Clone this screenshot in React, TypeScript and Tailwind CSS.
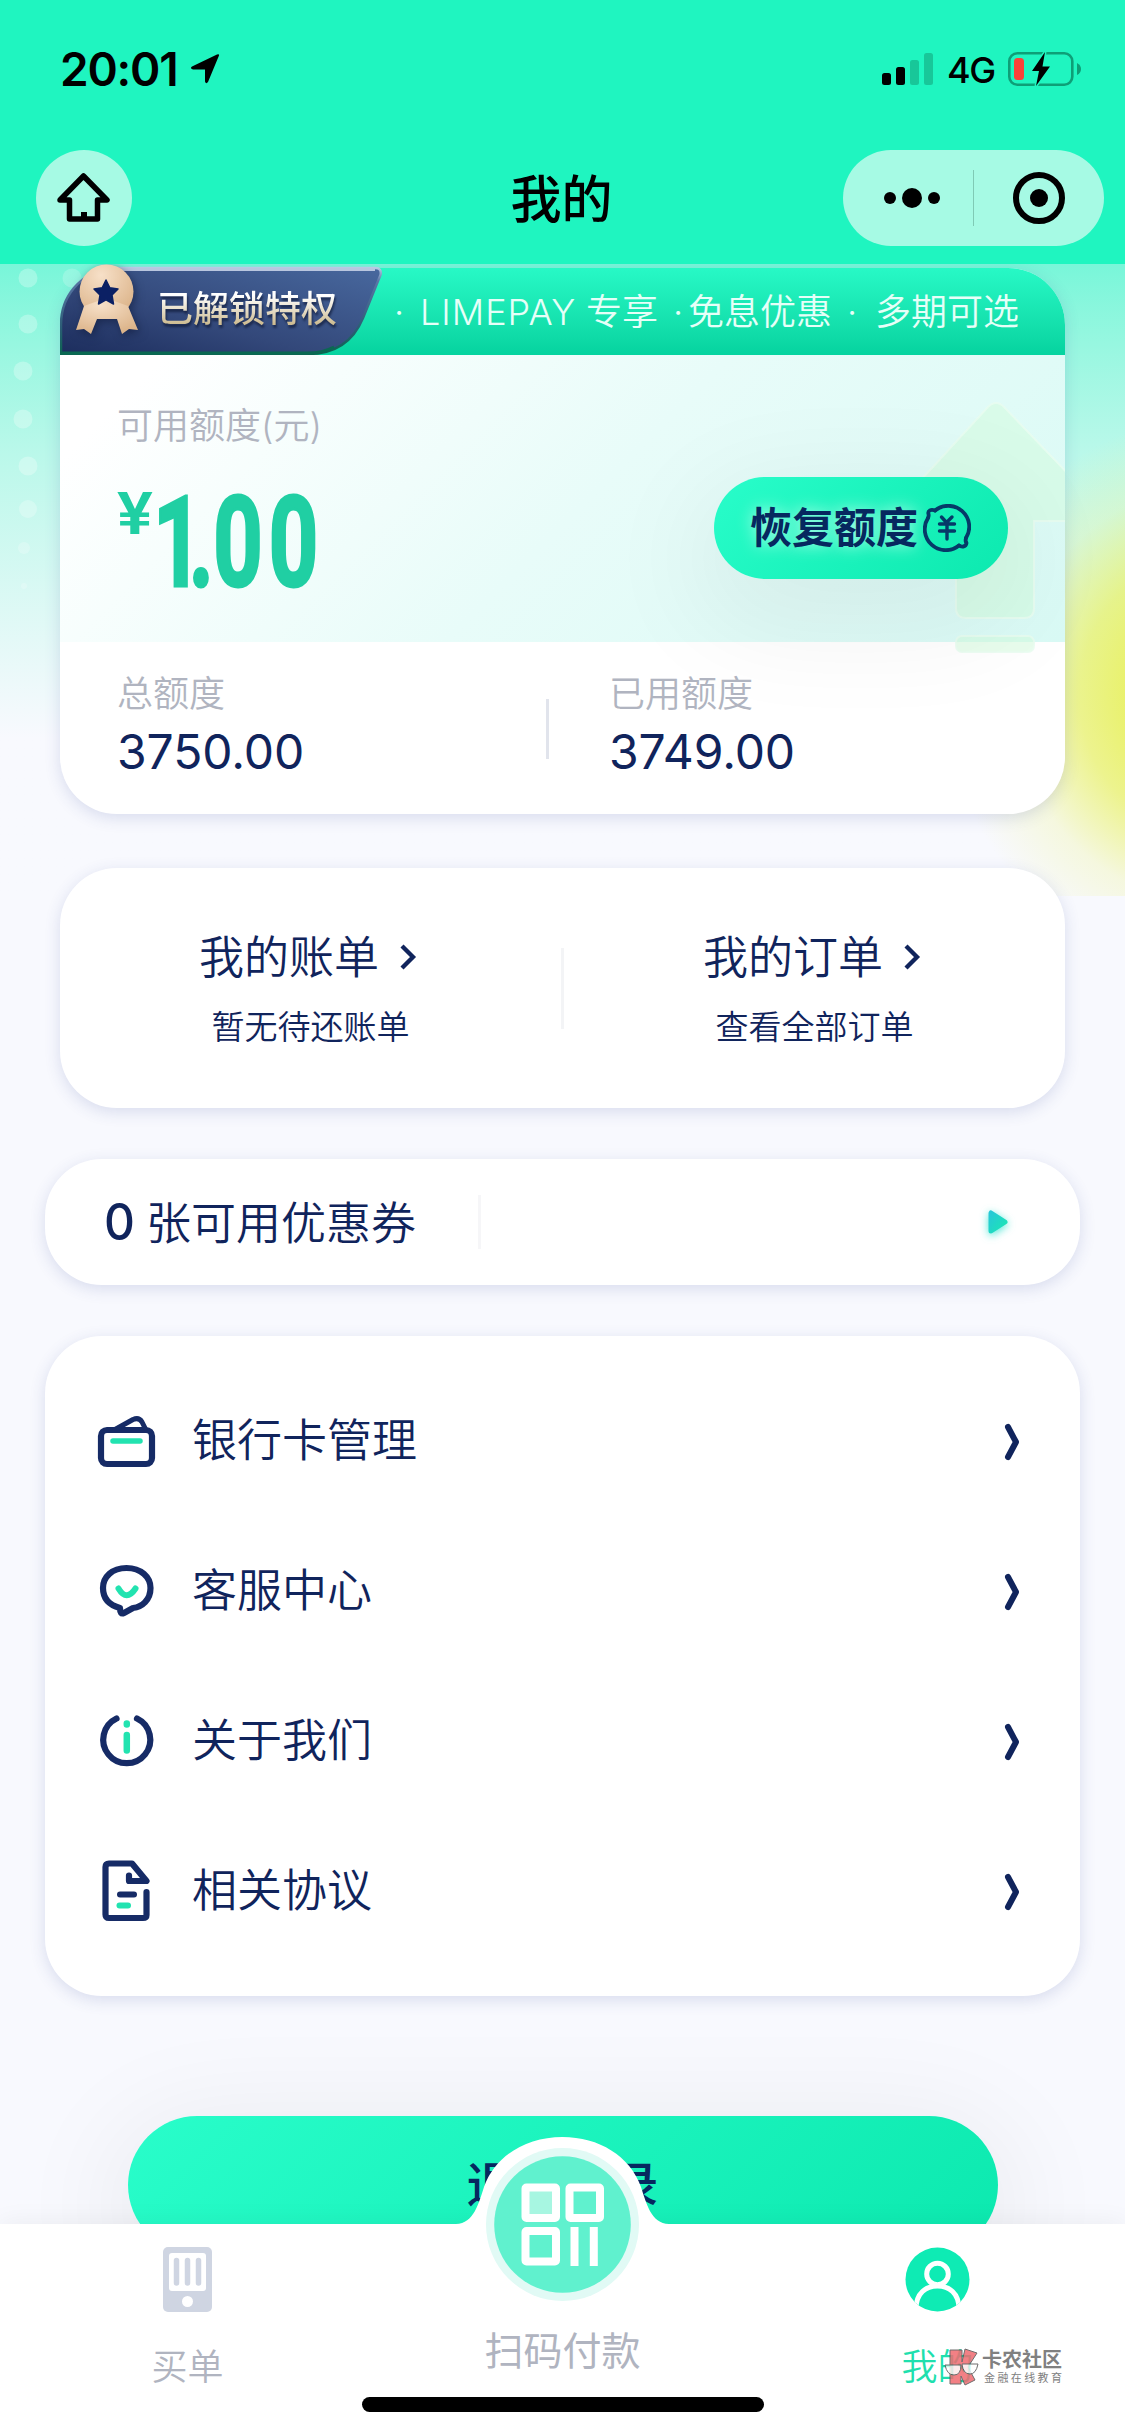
import React from "react";

const CARD_SHADOW = "shadow-[0_4px_16px_rgba(50,70,150,0.16)]";

function StatusBar() {
  return (
    <div className="flex h-[138px] items-center justify-between pl-[60px] pr-[43px]">
      <div className="flex items-center gap-[13px]">
        <span className="w-[117px] text-[46px] leading-[46px] font-semibold tracking-[-1.2px] text-black">20:01</span>
        <svg width="30" height="30" viewBox="0 0 30 30">
          <path d="M29 1.5 L18 28 Q16 30.500 15 27.500 V15.500 H3 Q-0.500 14.500 2 12.500 L27 0.500 Q29.500 -0.300 29 1.500Z" fill="#000" />
        </svg>
      </div>
      <div className="flex items-center">
        <svg width="52" height="34" viewBox="0 0 52 34">
          <rect x="0" y="21" width="9" height="12" rx="2.500" fill="#000" />
          <rect x="14" y="15" width="9" height="18" rx="2.500" fill="#000" />
          <rect x="28" y="8" width="9" height="25" rx="2.500" fill="#18c799" />
          <rect x="42" y="1" width="9" height="32" rx="2.500" fill="#18c799" />
        </svg>
        <span className="mt-[2px] ml-[13px] w-[61px] text-[36px] leading-[36px] font-[450] tracking-[-1.5px] text-black">4G</span>
        <svg width="74" height="34" viewBox="0 0 74 34">
          <rect x="1.300" y="1.300" width="63" height="31.400" rx="8" fill="none" stroke="#0e9f77" strokeWidth="2.600" />
          <path d="M69 11 Q73 13 73 17 Q73 21 69 23Z" fill="#0e9f77" />
          <rect x="6" y="6" width="10" height="22" rx="3.500" fill="#fb4238" />
          <path d="M37 0 L24 19 H31 L28 34 L42 14.500 H34.500 L37 0Z" fill="#000" stroke="#1ff5c0" strokeWidth="3" paintOrder="stroke" />
        </svg>
      </div>
    </div>
  );
}

function NavBar() {
  return (
    <div className="grid grid-cols-[1fr_auto_1fr] items-center pt-[12px] pl-[36px] pr-[21px]">
      <div className="flex size-[96px] items-center justify-center rounded-full bg-[#a6fae4]">
        <svg width="54" height="50" viewBox="0 0 54 50" fill="none" stroke="#000" strokeWidth="5.500" strokeLinejoin="round">
          <path d="M26.500 3 L50 27 H40.500 V46 H12.500 V27 H3 Z" />
          <path d="M27 39 V46" strokeWidth="6" />
        </svg>
      </div>
      <h1 className="pt-[3px] pr-[17px] text-[51px] leading-[93px] font-medium text-black">我的</h1>
      <div className="flex h-[96px] w-[261px] items-center justify-self-end rounded-full bg-[#a6fae4]">
        <div className="flex flex-1 items-center justify-center gap-[6px] pl-[8px]">
          <i className="size-[12px] rounded-full bg-black" />
          <i className="size-[20px] rounded-full bg-black" />
          <i className="size-[12px] rounded-full bg-black" />
        </div>
        <i className="h-[56px] w-px bg-[#7fcab5]" />
        <div className="flex w-[130px] items-center justify-center">
          <div className="flex size-[52px] items-center justify-center rounded-full border-[6px] border-black">
            <i className="size-[18px] rounded-full bg-black" />
          </div>
        </div>
      </div>
    </div>
  );
}

const DOTS: [number, number, number, number][] = [
  [28, 14, 9.5, 0.28], [72, 14, 9.5, 0.2], [28, 60, 9.5, 0.28], [23, 107, 9.5, 0.28], [23, 155, 9.5, 0.28],
  [28, 202, 9.5, 0.28], [28, 245, 9, 0.25], [24, 284, 6, 0.22], [24, 322, 3, 0.2],
];

function Backdrop() {
  return (
    <div className="absolute inset-x-0 top-0 h-[632px] overflow-hidden bg-linear-to-b from-[#78f6d9] from-0% via-[#baf8ea] via-30% to-[#f8f9fe] to-75%">
      <div className="absolute top-[150px] left-[945px] size-[560px] bg-[radial-gradient(closest-side,#e9f168_0%,#e9f168_32%,rgba(233,241,104,0.75)_52%,rgba(238,244,150,0.3)_76%,rgba(248,249,254,0)_100%)]" />
      <svg className="absolute top-0 left-0" width="90" height="340" viewBox="0 0 90 340">
        {DOTS.map(([cx, cy, r, o], i) => (
          <circle key={i} cx={cx} cy={cy} r={r} fill="#fff" opacity={o} />
        ))}
      </svg>
    </div>
  );
}

function PrivilegeBanner() {
  return (
    <div className="relative flex h-[87px] items-center rounded-t-[57px] bg-linear-to-b from-[#27f9c6] to-[#05d39f] text-[36px] leading-[44px] font-[350] text-[#e6fff8]">
      <svg className="absolute -top-[4px] left-0" width="324" height="92" viewBox="0 0 324 92">
        <defs>
          <linearGradient id="navy" x1="0" y1="1" x2="1" y2="0">
            <stop offset="0" stopColor="#1c2d5d" />
            <stop offset="0.400" stopColor="#33487a" />
            <stop offset="1" stopColor="#48689e" />
          </linearGradient>
          <linearGradient id="edge" x1="0" y1="0" x2="0" y2="1">
            <stop offset="0" stopColor="#b9c9e4" />
            <stop offset="0.150" stopColor="#5a76a6" />
            <stop offset="0.700" stopColor="#2b5d75" />
            <stop offset="1" stopColor="#0b6650" />
          </linearGradient>
          <radialGradient id="gold" cx="0.400" cy="0.200" r="0.800">
            <stop offset="0" stopColor="#f7e0c8" />
            <stop offset="1" stopColor="#dcb48a" />
          </radialGradient>
        </defs>
        <path d="M1 90 V61 C1 28 26 4 58 4 H315 Q322 4 320.500 11 L303 54 Q288 90 248 90Z" fill="url(#navy)" stroke="url(#edge)" strokeWidth="2.500" />
        <path d="M58 5.500 H315" stroke="#b9c6df" strokeWidth="3" />
        <path d="M2 89 H248 Q262 89 274 83" fill="none" stroke="#0a6852" strokeWidth="3" />
        <g className="drop-shadow-[2px_3px_4px_rgba(10,20,50,0.5)]">
          <circle cx="46.500" cy="27.500" r="27" fill="url(#gold)" />
          <path d="M24 42 L16 66 L24 65 L31 70 L37 55 H57 L62 70 L69 65 L78 66 L68 42 L46 34Z" fill="url(#gold)" />
        </g>
        <path d="M46 16 L49.800 23.800 L58 25 L52 31 L53.500 40 L46 35.800 L38.500 40 L40 31 L34 25 L42.200 23.800Z" fill="#0b2064" stroke="#0b2064" strokeWidth="1.500" strokeLinejoin="round" />
      </svg>
      <span className="relative mb-[5px] ml-[97px] w-[181px] bg-linear-to-b from-[#ffffff] from-20% to-[#cdbb90] to-85% bg-clip-text text-[36px] font-medium whitespace-nowrap text-transparent drop-shadow-[1px_3px_1px_rgba(15,25,55,0.7)]">已解锁特权</span>
      <div className="flex pl-[56px] whitespace-nowrap">
        <span className="w-[26px]">·</span>
        <span className="w-[166px] tracking-[1px]">LIMEPAY</span>
        <span className="w-[87px]">专享</span>
        <span className="w-[15px]">·</span>
        <span className="w-[159px]">免息优惠</span>
        <span className="w-[28px]">·</span>
        <span>多期可选</span>
      </div>
    </div>
  );
}

function CoinIcon() {
  return (
    <svg width="48" height="48" viewBox="0 0 48 48" fill="none" stroke="#063a68" strokeWidth="3.800" strokeLinecap="round" strokeLinejoin="round">
      <path d="M12 6.500 A21 21 0 0 1 43 34 M36 41.500 A21 21 0 0 1 5 14" />
      <path d="M12 6.500 C8 5 4.500 6.500 5.500 10 Q6 12 5 14" />
      <path d="M43 34 Q42 37 43.500 39 C43 43.500 38 43 36 41.500" />
      <path d="M18.500 13 L23.500 18.500 L29 13 M16.500 20 H31.500 M16.500 27 H31.500 M24 20 V35" strokeWidth="3.400" />
    </svg>
  );
}

function CreditCard() {
  return (
    <section className={`mx-[60px] mt-[4px] h-[546px] rounded-[57px] bg-white ${CARD_SHADOW}`}>
      <PrivilegeBanner />
      <div className="relative flex h-[287px] justify-between bg-[linear-gradient(135deg,#ffffff_8%,#e8fcf9_52%,#d9faf5_100%)]">
        <svg className="absolute top-[40px] right-0" width="150" height="262" viewBox="0 0 150 262">
          <g fill="#d2fbdc" fillOpacity="0.500" stroke="#e9fdf0" strokeOpacity="0.800" strokeWidth="2">
            <path d="M73 12 Q81 4 89 12 L160 86 V126 H119 V213 Q119 223 109 223 H51 Q41 223 41 213 V126 H10 Q-2 124 5 86Z" />
            <rect x="41" y="241" width="78" height="16" rx="6" />
          </g>
        </svg>
        <div className="pt-[51px] pl-[57px]">
          <p className="h-[40px] text-[36px] leading-[40px] font-[350] text-[#b0b4c0]">可用额度(元)</p>
          <div className="mt-[48px] flex h-[93px] text-[#20cfa3]">
            <span className="w-[36px] origin-left scale-x-[1.120] font-[Roboto] text-[60px] leading-[40px] font-semibold">¥</span>
            <span className="origin-left scale-x-[0.685] font-[Roboto] text-[126px] leading-[98px] font-bold [-webkit-text-stroke:3px_#20cfa3]">
              <span className="tracking-[-20px]">1</span>
              <span className="tracking-[-1px]">.</span>
              <span className="tracking-[9px]">00</span>
            </span>
          </div>
        </div>
        <button className="absolute top-[122px] right-[57px] flex h-[102px] w-[294px] items-center rounded-full bg-[linear-gradient(135deg,#29fdca,#0ce9af)] pl-[36px] shadow-[0_30px_110px_20px_rgba(0,0,0,0.06)]">
          <span className="mr-[5px] text-[42px] leading-[60px] font-bold text-[#06285f] [text-shadow:0_0_16px_rgba(190,255,235,0.9)]">恢复额度</span>
          <CoinIcon />
        </button>
      </div>
      <div className="flex h-[172px] pl-[57px] pt-[32px]">
        <Stat label="总额度" value="3750.00" />
        <i className="mt-[25px] mr-[60px] ml-[248px] h-[60px] w-[3px] bg-[#e1e4ec]" />
        <Stat label="已用额度" value="3749.00" />
      </div>
    </section>
  );
}

function Stat({ label, value }: { label: string; value: string }) {
  return (
    <div className="relative w-[181px]">
      <p className="h-[40px] text-[36px] leading-[40px] font-[350] whitespace-nowrap text-[#b0b4c0]">{label}</p>
      <p className="mt-[14px] text-[48px] leading-[48px] font-[380] tracking-[-0.1px] whitespace-nowrap text-[#10245c]">{value}</p>
    </div>
  );
}

function Shortcut({ title, note }: { title: string; note: string }) {
  return (
    <div className="flex w-[501px] flex-col items-center pt-[61px]">
      <div className="flex h-[58px] items-center gap-[20px] pr-[3px]">
        <span className="text-[45px] leading-[58px] font-[350] text-[#10245c]">{title}</span>
        <svg className="mb-[3px]" width="20" height="28" viewBox="0 0 20 28" fill="none" stroke="#10245c" strokeWidth="4.300">
          <path d="M3 3 L14 14 L3 25" />
        </svg>
      </div>
      <span className="mt-[17px] text-[33px] leading-[46px] font-[350] text-[#10245c]">{note}</span>
    </div>
  );
}

function Shortcuts() {
  return (
    <section className={`mx-[60px] mt-[54px] flex h-[240px] rounded-[57px] bg-white ${CARD_SHADOW}`}>
      <Shortcut title="我的账单" note="暂无待还账单" />
      <i className="mt-[80px] h-[81px] w-[3px] bg-[#f3f4f6]" />
      <Shortcut title="我的订单" note="查看全部订单" />
    </section>
  );
}

function Coupons() {
  return (
    <section className={`mx-[45px] mt-[51px] flex h-[126px] items-center rounded-[57px] bg-white pl-[59px] pr-[66px] text-[#10245c] ${CARD_SHADOW}`}>
      <span className="w-[42px] text-[51px] leading-[60px] font-medium">
        <span className="inline-block origin-left scale-x-[0.940]">0</span>
      </span>
      <span className="pt-[4px] text-[45px] leading-[60px] font-[350]">张可用优惠券</span>
      <i className="ml-[62px] h-[54px] w-[3px] bg-[#f6f6f8]" />
      <svg className="ml-auto drop-shadow-[0_2px_4px_rgba(40,225,205,0.8)]" width="28" height="30" viewBox="0 0 28 30">
        <defs>
          <linearGradient id="play" x1="0" y1="0" x2="1" y2="1">
            <stop offset="0" stopColor="#27c9d6" />
            <stop offset="1" stopColor="#1be6b4" />
          </linearGradient>
        </defs>
        <path d="M5 6 V24 L19 15Z" fill="url(#play)" stroke="url(#play)" strokeWidth="5" strokeLinejoin="round" />
      </svg>
    </section>
  );
}

const MENU = [
  {
    label: "银行卡管理",
    icon: (
      <g>
        <rect x="6" y="20" width="51" height="34" rx="6" />
        <path d="M20 19.500 L38 9.500 Q44 7 47 12 L50 18" strokeWidth="5" />
        <path d="M18 31 H45" stroke="#22e3b0" strokeWidth="5.500" />
      </g>
    ),
  },
  {
    label: "客服中心",
    icon: (
      <g>
        <path d="M31.500 8 C46 8 55.500 17 55.500 28 C55.500 40 47 47 38 48 L29 53 Q25 55 25 48 C14 45 8 38 8 28 C8 17 17 8 31.500 8Z" />
        <path d="M23.500 28.500 Q31.500 42 40.500 28.500" stroke="#22e3b0" strokeWidth="6" />
      </g>
    ),
  },
  {
    label: "关于我们",
    icon: (
      <g>
        <path d="M21.500 8.500 A23.500 23.500 0 1 0 42 8.500" />
        <path d="M31.800 13.500 V14.500 M31.800 25 V40.500" stroke="#22e3b0" strokeWidth="6.500" />
      </g>
    ),
  },
  {
    label: "相关协议",
    icon: (
      <g>
        <path d="M51.500 32 V55 Q51.500 58 48 58 H14 Q10.500 58 10.500 54.500 V7 Q10.500 3.500 14 3.500 H37 L51.500 21 H34 V15.500" />
        <path d="M25 34.500 H39" strokeWidth="6" />
        <path d="M24.500 45.500 H33" stroke="#22e3b0" strokeWidth="6" />
      </g>
    ),
  },
];

function Menu() {
  return (
    <section className={`mx-[45px] mt-[51px] h-[660px] rounded-[57px] bg-white py-[30px] ${CARD_SHADOW}`}>
      {MENU.map(({ label, icon }) => (
        <div key={label} className="flex h-[150px] items-center pr-[58px] pl-[50px]">
          <svg width="64" height="62" viewBox="0 0 64 62" fill="none" stroke="#162b66" strokeWidth="6.200" strokeLinecap="round" strokeLinejoin="round">
            {icon}
          </svg>
          <span className="ml-[33px] text-[45px] leading-[60px] font-[350] text-[#10245c]">{label}</span>
          <svg className="ml-auto mt-[2px]" width="20" height="40" viewBox="0 0 20 40" fill="none" stroke="#10245c" strokeWidth="6" strokeLinecap="round" strokeLinejoin="round">
            <path d="M6 5 L14 20 L6 35" />
          </svg>
        </div>
      ))}
    </section>
  );
}

function TabBar() {
  return (
    <footer className="relative h-[212px] bg-white shadow-[0_-2px_24px_rgba(0,0,0,0.05)]">
      <svg className="absolute -top-[100px] left-[442px]" width="241" height="180" viewBox="0 0 241 180">
        <path d="M14 100 C32 100 37 78 42 63 C53 32 84 13 120.500 13 C157 13 188 32 199 63 C204 78 209 100 227 100 V110 H14Z" fill="#fff" />
        <circle cx="120.500" cy="100.500" r="76.500" fill="#e1faf5" />
        <circle cx="120.500" cy="100.500" r="68.300" fill="#60f1ce" />
        <g fill="none" stroke="#fff" strokeWidth="8">
          <rect x="83.500" y="63.500" width="30.500" height="30.500" rx="1" fill="#a7f6e1" />
          <rect x="127.500" y="63.500" width="30.500" height="30.500" rx="1" />
          <rect x="83.500" y="107" width="30.500" height="30.500" rx="1" />
          <path d="M132.500 103 V142 M151.800 103 V142" />
        </g>
      </svg>
      <div className="grid h-full grid-cols-3 text-[36px] leading-[40px] font-[350] text-[#b0b4c0]">
        <div className="flex flex-col items-center pt-[23px]">
          <svg width="49" height="65" viewBox="0 0 49 65">
            <rect width="49" height="65" rx="5" fill="#cfd5e2" />
            <rect x="6" y="6" width="37" height="38" rx="3" fill="#fff" />
            <path d="M13.500 13.500 V36 M24.500 13.500 V36 M35.500 13.500 V36" stroke="#cfd5e2" strokeWidth="5.500" strokeLinecap="round" />
            <circle cx="24.500" cy="54.500" r="5.500" fill="#fff" />
          </svg>
          <span className="mt-[35px]">买单</span>
        </div>
        <div className="flex flex-col items-center pt-[104px]">
          <span className="text-[39px] leading-[46px] font-normal">扫码付款</span>
        </div>
        <div className="flex flex-col items-center pt-[23px] text-[#1fdfae]">
          <svg width="65" height="65" viewBox="0 0 65 65" fill="none" stroke="#fff" strokeWidth="5">
            <defs>
              <clipPath id="avatar">
                <circle cx="32.500" cy="32.500" r="32" />
              </clipPath>
            </defs>
            <circle cx="32.500" cy="32.500" r="32" fill="#0eebb4" stroke="none" />
            <g clipPath="url(#avatar)">
              <circle cx="32.500" cy="27" r="10.800" />
              <path d="M11 62 C11 46 21 39 32.500 39 C44 39 54 46 54 62" />
            </g>
          </svg>
          <span className="mt-[35px]">我的</span>
        </div>
      </div>
      <Watermark />
      <div className="absolute bottom-[24px] left-[362px] h-[15px] w-[402px] rounded-full bg-black" />
    </footer>
  );
}

function Watermark() {
  return (
    <div className="absolute top-[124px] left-[944px] flex items-center gap-[3px] text-[#808080]">
      <svg width="35" height="38" viewBox="0 0 35 38" stroke="#555" strokeWidth="1" opacity="0.850">
        <path d="M6 2 H18 V14 L21 1 L33 5 L24 19 L31 32 L21 37 L17 28 V36 H6Z" fill="#f06a70" />
        <path d="M1 17 H17 Q17 27 10 27 Q3 27 1 17Z M18 16 H34 Q32 26 26 26 Q19 26 18 16Z" fill="#fff" fillOpacity="0.850" />
      </svg>
      <div className="whitespace-nowrap">
        <p className="text-[20px] leading-[22px] font-bold">卡农社区</p>
        <p className="pl-[2px] text-[11px] leading-[14px] tracking-[2.400px]">金融在线教育</p>
      </div>
    </div>
  );
}

export default function App() {
  return (
    <div className="flex h-[2436px] w-[1125px] flex-col overflow-hidden bg-[#f8f9fe] font-['Inter','Noto_Sans_CJK_SC',sans-serif]">
      <header className="h-[264px] shrink-0 bg-[#1ff5c0]">
        <StatusBar />
        <NavBar />
      </header>
      <main className="relative h-[1960px] shrink-0 overflow-hidden">
        <Backdrop />
        <div className="relative flow-root">
          <CreditCard />
          <Shortcuts />
          <Coupons />
          <Menu />
          <button className="mx-auto mt-[120px] block h-[138px] w-[870px] rounded-full bg-[linear-gradient(135deg,#29fdca,#0ce9af)] text-[48px] font-medium text-[#06285f] shadow-[0_20px_110px_20px_rgba(0,0,0,0.06)]">
            退出登录
          </button>
        </div>
      </main>
      <TabBar />
    </div>
  );
}
